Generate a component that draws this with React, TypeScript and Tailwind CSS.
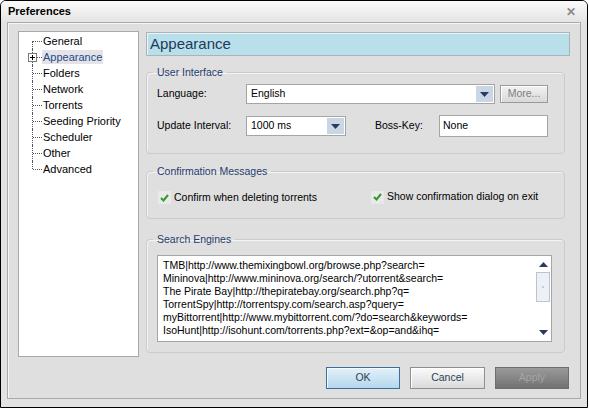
import React from "react";

const treeItems = [
  "General",
  "Appearance",
  "Folders",
  "Network",
  "Torrents",
  "Seeding Priority",
  "Scheduler",
  "Other",
  "Advanced",
];

const engines = [
  "TMB|http://www.themixingbowl.org/browse.php?search=",
  "Mininova|http://www.mininova.org/search/?utorrent&search=",
  "The Pirate Bay|http://thepiratebay.org/search.php?q=",
  "TorrentSpy|http://torrentspy.com/search.asp?query=",
  "myBittorrent|http://www.mybittorrent.com/?do=search&keywords=",
  "IsoHunt|http://isohunt.com/torrents.php?ext=&op=and&ihq=",
];

function DownArrow() {
  return (
    <svg width="9" height="5" viewBox="0 0 9 5">
      <path d="M0 0 H9 L4.5 5 Z" fill="#2a3a5e" />
    </svg>
  );
}

function UpArrow() {
  return (
    <svg width="9" height="5" viewBox="0 0 9 5">
      <path d="M0 5 H9 L4.5 0 Z" fill="#2a3a5e" />
    </svg>
  );
}

function Combo({ value, width }: { value: string; width: string }) {
  return (
    <div
      className={`${width} h-[20px] flex items-center bg-white border border-[#a5a5a5] pl-[4px] pr-[1px]`}
    >
      <span className="flex-1">{value}</span>
      <div className="w-[17px] h-[16px] bg-[#c9d6e3] flex items-center justify-center">
        <DownArrow />
      </div>
    </div>
  );
}

function Check({ label }: { label: string }) {
  return (
    <div className="flex items-center">
      <div className="w-[13px] h-[13px] bg-[#e9e9e9] flex items-center justify-center">
        <svg width="9" height="8" viewBox="0 0 9 8">
          <path d="M1 4 L3.5 6.5 L8 1" stroke="#2f9b2f" strokeWidth="2" fill="none" />
        </svg>
      </div>
      <span className="ml-[3px]">{label}</span>
    </div>
  );
}

function Group({
  title,
  className,
  inner,
  children,
}: {
  title: string;
  className: string;
  inner: string;
  children: React.ReactNode;
}) {
  return (
    <fieldset
      className={`w-[419px] border border-[#cbcbcb] rounded-[4px] shadow-[inset_1px_1px_0_#f4f4f4] ${className}`}
    >
      <legend className="ml-[6px] px-[4px] leading-[13px] text-[#1f3d6e]">{title}</legend>
      <div className={inner}>{children}</div>
    </fieldset>
  );
}

export default function App() {
  return (
    <div className="w-[589px] h-[409px] bg-white font-['Liberation_Sans',sans-serif] text-[10.5px] text-black">
      <div className="w-[588px] h-[408px] border border-black rounded-t-[6px] bg-[#e2e2e2] flex flex-col overflow-hidden">
        {/* title bar */}
        <div className="h-[21px] flex items-center justify-between pl-[7px] pr-[11px] bg-gradient-to-b from-[#fbfbfb] to-[#e4e4e4]">
          <span className="font-bold text-[11px]">Preferences</span>
          <span className="text-[#8a8a8a] font-bold text-[12px]">✕</span>
        </div>

        {/* body */}
        <div className="mx-[6px] h-[377px] border border-[#a9a9a9] shadow-[inset_1px_1px_0_#f6f6f6] bg-[#dfdfdf] pl-[10px] pt-[8px] flex flex-col">
          <div className="flex h-[326px]">
            {/* tree */}
            <div className="w-[121px] h-[326px] bg-white border border-[#a9a9a9] pt-[1px] text-[11px]">
              {treeItems.map((item, i) => (
                <div key={item} className="relative h-[16px] flex items-center pl-[23px]">
                  <span
                    className={`absolute left-[13px] w-0 border-l border-dotted border-[#555] ${
                      i === 0
                        ? "top-[8px] h-[8px]"
                        : i === treeItems.length - 1
                        ? "top-0 h-[8px]"
                        : "top-0 h-[16px]"
                    }`}
                  />
                  <span className="absolute left-[14px] top-[8px] w-[9px] border-t border-dotted border-[#555]" />
                  {item === "Appearance" && (
                    <span className="absolute left-[9px] top-[4px] w-[9px] h-[9px] bg-white border border-[#7a7a7a] flex items-center justify-center">
                      <svg width="5" height="5" viewBox="0 0 5 5">
                        <path d="M0 2.5 H5 M2.5 0 V5" stroke="#000" strokeWidth="1" />
                      </svg>
                    </span>
                  )}
                  <span
                    className={`px-[1px] leading-[14px] ${
                      item === "Appearance" ? "bg-[#e3e3e8] text-[#244a86]" : ""
                    }`}
                  >
                    {item}
                  </span>
                </div>
              ))}
            </div>

            {/* right column */}
            <div className="ml-[7px] w-[424px] pt-[1px]">
              <div className="h-[24px] bg-[#b9dfea] border border-[#a8b4b8] shadow-[inset_1px_1px_0_#e8f6fa] flex items-center pl-[3px] text-[15px] text-[#1d3a5c]">
                Appearance
              </div>

              <Group
                title="User Interface"
                className="mt-[10px] h-[88px]"
                inner="pl-[10px] pt-[5px]"
              >
                <div className="flex items-center h-[20px]">
                  <span className="w-[89px]">Language:</span>
                  <Combo value="English" width="w-[249px]" />
                  <div className="ml-[5px] w-[48px] h-[18px] border border-[#9a9a9a] bg-gradient-to-b from-[#f2f2f2] to-[#d8d8d8] shadow-[inset_1px_1px_0_#fff] flex items-center justify-center text-[#7c7c7c]">
                    More...
                  </div>
                </div>
                <div className="flex items-center h-[22px] mt-[11px]">
                  <span className="w-[89px]">Update Interval:</span>
                  <Combo value="1000 ms" width="w-[100px]" />
                  <span className="ml-[29px] w-[64px]">Boss-Key:</span>
                  <div className="w-[109px] h-[22px] bg-white border border-[#a5a5a5] flex items-center pl-[3px]">
                    None
                  </div>
                </div>
              </Group>

              <Group
                title="Confirmation Messages"
                className="mt-[11px] h-[54px]"
                inner="pl-[11px] pt-[12px]"
              >
                <div className="flex h-[14px]">
                  <div className="w-[213px]">
                    <Check label="Confirm when deleting torrents" />
                  </div>
                  <Check label="Show confirmation dialog on exit" />
                </div>
              </Group>

              <Group
                title="Search Engines"
                className="mt-[14px] h-[120px]"
                inner="pl-[10px] pt-[9px]"
              >
                <div className="w-[395px] h-[87px] bg-white border border-[#a5a5a5] flex">
                  <div className="flex-1 pl-[5px] pt-[3px] leading-[13px] whitespace-nowrap overflow-hidden">
                    {engines.map((e) => (
                      <div key={e}>{e}</div>
                    ))}
                  </div>
                  <div className="w-[16px] flex flex-col items-center pt-[6px] pb-[6px]">
                    <UpArrow />
                    <div className="mt-[5px] w-[14px] h-[30px] border border-[#b7c6d6] bg-[#edf1f6] flex items-center justify-center">
                      <span className="w-[2px] h-[2px] bg-[#c0ccd8]" />
                    </div>
                    <div className="flex-1" />
                    <DownArrow />
                  </div>
                </div>
              </Group>
            </div>
          </div>

          {/* buttons */}
          <div className="mt-[10px] flex justify-end pr-[11px] gap-[10px]">
            <div className="w-[74px] h-[22px] border border-[#3d6f9e] bg-gradient-to-b from-[#e3f1fa] to-[#b4d7ec] shadow-[inset_1px_1px_0_#f4fbff] flex items-center justify-center text-[#2c3e55]">
              OK
            </div>
            <div className="w-[75px] h-[22px] border border-[#8e8e8e] bg-gradient-to-b from-[#fbfbfb] to-[#dadada] shadow-[inset_1px_1px_0_#fff] flex items-center justify-center text-[#2c3e55]">
              Cancel
            </div>
            <div className="w-[74px] h-[22px] border border-[#6e6e6e] bg-gradient-to-b from-[#9a9a9a] to-[#727272] flex items-center justify-center text-[#a4a4a4]">
              Apply
            </div>
          </div>
        </div>
      </div>
    </div>
  );
}
